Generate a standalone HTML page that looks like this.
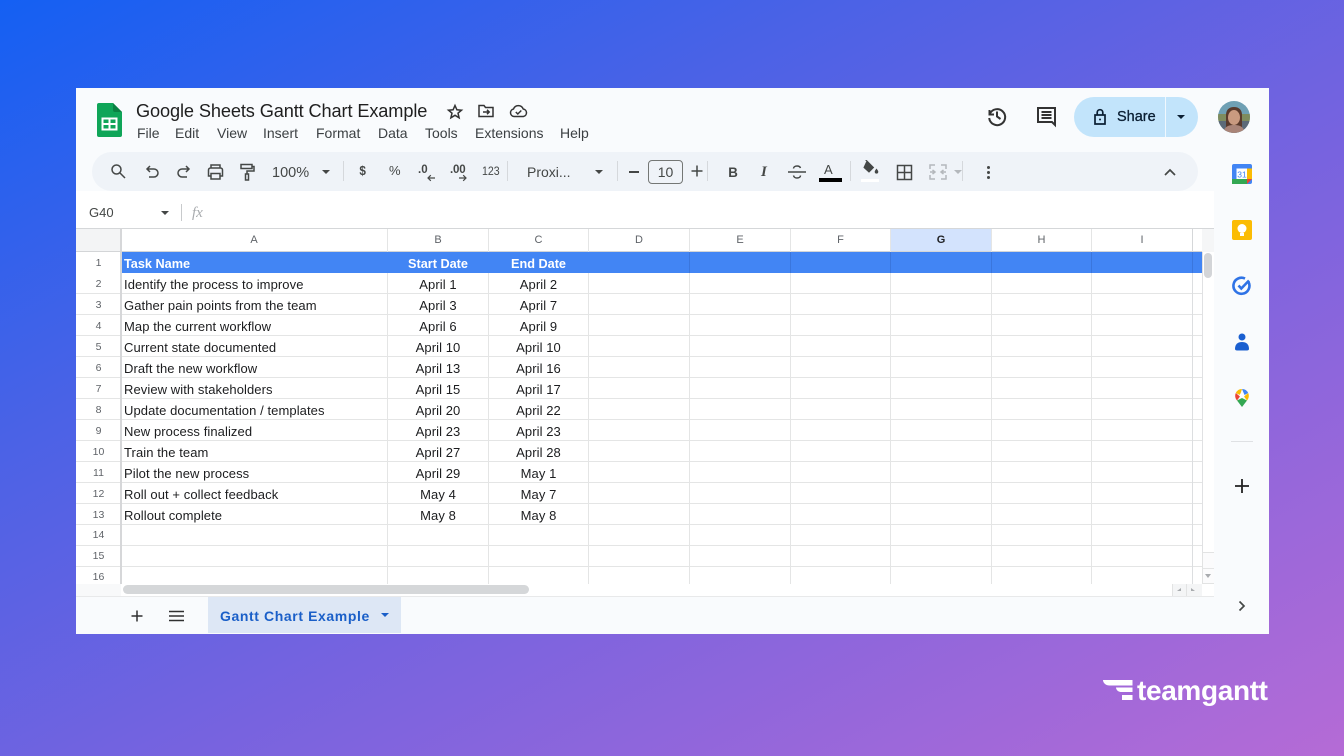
<!DOCTYPE html>
<html lang="en"><head><meta charset="utf-8"><title>Google Sheets Gantt Chart Example</title>
<style>
*{box-sizing:border-box;margin:0;padding:0}
html,body{width:1344px;height:756px;overflow:hidden}
body{position:relative;background:linear-gradient(152deg,#1460f3 0%,#4a62e6 30%,#7763df 58%,#b56bd6 100%);font-family:"Liberation Sans",sans-serif;color:#202124}
.a{position:absolute;white-space:nowrap}
#app{position:absolute;left:76px;top:88px;width:1193px;height:546px;background:#f9fbfd;overflow:hidden;filter:blur(.35px)}
.t{position:absolute;white-space:nowrap;line-height:16px}
.m{font-size:14px;color:#3c4043;top:37px}
.l{position:absolute;background:#e4e5e5}
.v{position:absolute;width:1px;background:#e4e5e5;top:141px;height:23px}
.w{position:absolute;width:1px;background:#e4e5e5;top:185px;height:311px}
.b{position:absolute;width:1px;background:rgba(40,80,160,.28);top:164px;height:21px}
.ic{position:absolute;overflow:visible;fill:none;stroke:#444746;stroke-width:1.5}
.sep{position:absolute;width:1px;height:20px;top:73px;background:#d5d8dc}
.c{position:absolute;font-size:13px;line-height:20px;color:#1c1d1f;white-space:nowrap;letter-spacing:.08px}
.ctr{text-align:center}
.rh{position:absolute;left:0;width:45px;text-align:center;font-size:10.5px;color:#5f6368;line-height:20px}
.ch{position:absolute;top:141px;text-align:center;font-size:11px;color:#5f6368;line-height:22px}
.tri{position:absolute;width:0;height:0;border-left:4px solid transparent;border-right:4px solid transparent;border-top:4px solid #444746}
</style></head><body>
<div id="app">
<svg class="a" style="left:21px;top:15px" width="25" height="34" viewBox="0 0 25 34"><path d="M2 0H16L25 9V32a2 2 0 0 1-2 2H2a2 2 0 0 1-2-2V2a2 2 0 0 1 2-2z" fill="#0fa558"/><path d="M16 0L25 9H18a2 2 0 0 1-2-2z" fill="#0b8043"/><path d="M5.500 15.500H19.500V26.500H5.500zM5.500 21H19.500M12.500 15.500V26.500" fill="none" stroke="#fff" stroke-width="2"/></svg>
<div class="t" style="left:60px;top:12px;font-size:18.200px;line-height:22px;color:#1f1f1f;letter-spacing:-.12px">Google Sheets Gantt Chart Example</div>
<svg class="ic" style="left:370px;top:15px;stroke:#333" width="18" height="18" viewBox="0 0 18 18"><path d="M9 2.500l1.900 4.300 4.600.4-3.500 3 1.100 4.600L9 12.300l-4.100 2.500L6 10.200l-3.500-3 4.600-.4z"/></svg>
<svg class="ic" style="left:401px;top:15px;stroke:#333" width="18" height="16" viewBox="0 0 18 16"><path d="M2 2.500h5l1.500 2H16v9H2zM6 9h6M10 6.800L12.200 9 10 11.200"/></svg>
<svg class="ic" style="left:433px;top:15px;stroke:#333" width="19" height="16" viewBox="0 0 19 16"><path d="M5 13.500a3.800 3.800 0 0 1-.5-7.500A5.200 5.200 0 0 1 14.200 6a3.800 3.800 0 0 1 .2 7.500zM6.800 9l2 2 3.500-3.500"/></svg>
<div class="t m" style="left:61px">File</div><div class="t m" style="left:99px">Edit</div><div class="t m" style="left:141px">View</div><div class="t m" style="left:187px">Insert</div><div class="t m" style="left:240px">Format</div><div class="t m" style="left:302px">Data</div><div class="t m" style="left:349px">Tools</div><div class="t m" style="left:399px">Extensions</div><div class="t m" style="left:484px">Help</div>
<svg class="ic" style="left:910px;top:17px;stroke:#333;stroke-width:2" width="22" height="22" viewBox="0 0 22 22"><path d="M3.500 5v4.500H8M3.800 9A8 8 0 1 1 3.200 13M11 6.500V11.500L14.500 14"/></svg>
<svg class="ic" style="left:960px;top:18px;stroke:#333;stroke-width:2" width="22" height="22" viewBox="0 0 22 22"><path d="M2 2h17v17l-3-3H2zM5.500 6h10M5.500 9h10M5.500 12h10"/></svg>
<div class="a" style="left:998px;top:9px;width:124px;height:40px;border-radius:20px;background:#c2e4fb"></div>
<div class="a" style="left:1089px;top:9px;width:1px;height:40px;background:#f0f8fe"></div>
<svg class="ic" style="left:1016px;top:20px;stroke:#0b1f33;stroke-width:1.700" width="16" height="18" viewBox="0 0 16 18"><path d="M3 7h10v9H3zM5.200 7V4.500a2.800 2.800 0 0 1 5.600 0V7"/><circle cx="8" cy="11.500" r="1" fill="#0b1f33" stroke="none"/></svg>
<div class="t" style="left:1041px;top:21px;font-size:14.500px;color:#0b1f33;-webkit-text-stroke:.3px #0b1f33">Share</div>
<div class="tri" style="left:1101px;top:27px;border-top-color:#0b1f33"></div>
<svg class="a" style="left:1142px;top:13px" width="32" height="32" viewBox="0 0 32 32"><defs><clipPath id="av"><circle cx="16" cy="16" r="16"/></clipPath></defs><g clip-path="url(#av)"><rect width="32" height="32" fill="#6fa0b4"/><rect y="13" width="32" height="9" fill="#7e8c5e"/><rect y="20" width="32" height="12" fill="#5c6a78"/><path d="M8 28V14c0-5 3-8 8-8s8 3 8 8v14z" fill="#5a3a2c"/><ellipse cx="16" cy="16.500" rx="6" ry="7.500" fill="#c99a80"/><path d="M5 32c1-6 5-8 11-8s10 2 11 8z" fill="#a98478"/></g></svg>
<div class="a" style="left:16px;top:64px;width:1106px;height:39px;border-radius:20px;background:#eff3f8"></div>
<svg class="ic" style="left:34px;top:75px" width="16" height="16" viewBox="0 0 16 16"><circle cx="6.500" cy="6.500" r="4.500"/><path d="M10 10l5 5"/></svg>
<svg class="ic" style="left:69px;top:77px" width="15" height="14" viewBox="0 0 15 14"><path d="M5 1L2 4l3 3M2 4h7a3.700 3.700 0 0 1 0 8H4"/></svg>
<svg class="ic" style="left:100px;top:77px" width="15" height="14" viewBox="0 0 15 14"><path d="M10 1l3 3-3 3M13 4H6a3.700 3.700 0 0 0 0 8h5"/></svg>
<svg class="ic" style="left:131px;top:76px" width="17" height="16" viewBox="0 0 17 16"><path d="M4 4V1h9v3M4 12H1.500V6a2 2 0 0 1 2-2h10a2 2 0 0 1 2 2v6H13M4 9.500h9V15H4z"/></svg>
<svg class="ic" style="left:164px;top:75px" width="15" height="18" viewBox="0 0 15 18"><path d="M1 1.500h11v4H1zM12 3.500h2V8H7v3M5.500 11h3v6h-3z"/></svg>
<div class="t" style="left:196px;top:77px;font-size:14.500px;color:#444746">100%</div>
<div class="tri" style="left:246px;top:82px"></div>
<div class="sep" style="left:267px"></div>
<div class="t" style="left:283px;top:75px;font-size:13px;font-weight:700;color:#444746;transform:scaleX(.9)">$</div>
<div class="t" style="left:313px;top:75px;font-size:13px;color:#444746">%</div>
<div class="t" style="left:342px;top:74px;font-size:11.500px;font-weight:700;color:#444746">.0</div>
<svg class="ic" style="left:351px;top:86px;stroke-width:1.200" width="8" height="8" viewBox="0 0 8 8"><path d="M8 4H1M3.800 1.200L1 4l2.800 2.800"/></svg>
<div class="t" style="left:374px;top:74px;font-size:11.500px;font-weight:700;color:#444746;letter-spacing:-.2px">.00</div>
<svg class="ic" style="left:383px;top:86px;stroke-width:1.200" width="8" height="8" viewBox="0 0 8 8"><path d="M0 4h7M4.200 1.200L7 4 4.200 6.800"/></svg>
<div class="t" style="left:406px;top:76px;font-size:11.500px;color:#444746;transform:scaleX(.92);transform-origin:left">123</div>
<div class="sep" style="left:431px"></div>
<div class="t" style="left:451px;top:76px;font-size:14px;color:#444746">Proxi...</div>
<div class="tri" style="left:519px;top:82px"></div>
<div class="sep" style="left:541px"></div>
<div class="a" style="left:553px;top:83px;width:10px;height:1.500px;background:#444746"></div>
<div class="a" style="left:572px;top:72px;width:35px;height:24px;border:1px solid #747775;border-radius:4px;font-size:14px;line-height:22px;text-align:center;color:#444746">10</div>
<svg class="ic" style="left:615px;top:77px" width="12" height="12" viewBox="0 0 12 12"><path d="M6 .5v11M.5 6h11"/></svg>
<div class="sep" style="left:631px"></div>
<div class="t" style="left:652px;top:76px;font-size:14px;font-weight:700;color:#444746;transform:scaleX(.95)">B</div>
<div class="t" style="left:685px;top:76px;font-size:15px;font-style:italic;font-family:'Liberation Serif',serif;font-weight:700;color:#444746">I</div>
<svg class="ic" style="left:712px;top:76px" width="18" height="16" viewBox="0 0 18 16"><path d="M0 8h18M12.500 4C12 2.500 11 2 9 2S5.500 3 5.500 4.500M5.500 11.500C6 13.500 7 14 9 14s3.500-1 3.500-2.500"/></svg>
<div class="t" style="left:748px;top:74px;font-size:13px;color:#444746">A</div>
<div class="a" style="left:743px;top:90px;width:23px;height:4px;background:#000"></div>
<div class="sep" style="left:774px"></div>
<svg class="a" style="left:786px;top:72px" width="18" height="16" viewBox="0 0 18 16"><path d="M5 1l6.500 6.500L7 12 2 7.500zM5 1L3.500 0" fill="#444746" stroke="#444746" stroke-width="1"/><path d="M14.500 8.500c1 1.500 1.800 2.300 1.800 3.300a1.800 1.800 0 0 1-3.600 0c0-1 .8-1.800 1.800-3.300z" fill="#444746"/></svg>
<div class="a" style="left:785px;top:91px;width:18px;height:3px;background:#fff"></div>
<svg class="ic" style="left:820px;top:76px" width="17" height="17" viewBox="0 0 17 17"><path d="M1.500 1.500h14v14h-14zM8.500 1.500v14M1.500 8.500h14"/></svg>
<svg class="ic" style="left:853px;top:76px;stroke:#b4b8bc" width="18" height="16" viewBox="0 0 18 16"><path d="M1 5V1h5M1 11v4h5M17 5V1h-5M17 11v4h-5M1 8h4M17 8h-4M3.500 6L6 8 3.500 10M14.500 6L12 8l2.500 2"/></svg>
<div class="tri" style="left:878px;top:82px;border-top-color:#b4b8bc"></div>
<div class="sep" style="left:886px"></div>
<div class="a" style="left:911px;top:78px;width:3px;height:3px;border-radius:2px;background:#444746;box-shadow:0 5px 0 #444746,0 10px 0 #444746"></div>
<svg class="ic" style="left:1088px;top:80px;stroke-width:1.700" width="12" height="8" viewBox="0 0 12 8"><path d="M1 7l5-5 5 5"/></svg>
<div class="a" style="left:0;top:103px;width:1138px;height:37px;background:#fff"></div>
<div class="t" style="left:13px;top:117px;font-size:13px;color:#444746">G40</div>
<div class="tri" style="left:85px;top:123px"></div>
<div class="a" style="left:105px;top:116px;width:1px;height:17px;background:#c8cacc"></div>
<div class="t" style="left:116px;top:117px;font-size:15px;font-style:italic;font-family:'Liberation Serif',serif;color:#a8abae">fx</div>
<div class="a" style="left:0;top:140px;width:1138px;height:369px;background:#fff"></div>
<div class="a" style="left:0;top:140px;width:45px;height:24px;background:#f3f4f5"></div>
<div class="a" style="left:815px;top:141px;width:100px;height:23px;background:#d3e3fd"></div>
<div class="l" style="left:0;top:140px;width:1138px;height:1px;background:#d5d7d9"></div>
<div class="a" style="left:1126px;top:141px;width:12px;height:23px;background:#f5f6f7"></div>
<div class="a" style="left:45px;top:164px;width:1081px;height:21px;background:#4285f4"></div>
<div class="l" style="left:0;top:163px;width:1126px;height:1px;background:#d3d5d7"></div>
<div class="l" style="left:0;top:205px;width:1126px;height:1px"></div><div class="l" style="left:0;top:226px;width:1126px;height:1px"></div><div class="l" style="left:0;top:247px;width:1126px;height:1px"></div><div class="l" style="left:0;top:268px;width:1126px;height:1px"></div><div class="l" style="left:0;top:289px;width:1126px;height:1px"></div><div class="l" style="left:0;top:310px;width:1126px;height:1px"></div><div class="l" style="left:0;top:331px;width:1126px;height:1px"></div><div class="l" style="left:0;top:352px;width:1126px;height:1px"></div><div class="l" style="left:0;top:373px;width:1126px;height:1px"></div><div class="l" style="left:0;top:394px;width:1126px;height:1px"></div><div class="l" style="left:0;top:415px;width:1126px;height:1px"></div><div class="l" style="left:0;top:436px;width:1126px;height:1px"></div><div class="l" style="left:0;top:457px;width:1126px;height:1px"></div><div class="l" style="left:0;top:478px;width:1126px;height:1px"></div>
<div class="l" style="left:44px;top:140px;width:2px;height:369px;background:#d6d7d9"></div>
<div class="v" style="left:311px"></div><div class="w" style="left:311px"></div>
<div class="v" style="left:412px"></div><div class="w" style="left:412px"></div>
<div class="v" style="left:512px"></div><div class="w" style="left:512px"></div>
<div class="v" style="left:613px"></div><div class="w" style="left:613px"></div><div class="b" style="left:613px"></div>
<div class="v" style="left:714px"></div><div class="w" style="left:714px"></div><div class="b" style="left:714px"></div>
<div class="v" style="left:814px"></div><div class="w" style="left:814px"></div><div class="b" style="left:814px"></div>
<div class="v" style="left:915px"></div><div class="w" style="left:915px"></div><div class="b" style="left:915px"></div>
<div class="v" style="left:1015px"></div><div class="w" style="left:1015px"></div><div class="b" style="left:1015px"></div>
<div class="v" style="left:1116px;background:#d5d7d9"></div><div class="w" style="left:1116px;background:#dcdee0"></div><div class="b" style="left:1116px"></div>
<div class="l" style="left:1126px;top:164px;width:1px;height:345px;background:#e0e1e3"></div>
<div class="ch" style="left:45px;width:266px">A</div><div class="ch" style="left:312px;width:100px">B</div><div class="ch" style="left:413px;width:99px">C</div><div class="ch" style="left:513px;width:100px">D</div><div class="ch" style="left:614px;width:100px">E</div><div class="ch" style="left:715px;width:99px">F</div><div class="ch" style="left:815px;width:100px;font-weight:700;color:#202124">G</div><div class="ch" style="left:916px;width:99px">H</div><div class="ch" style="left:1016px;width:100px">I</div>
<div class="rh" style="top:165px">1</div><div class="rh" style="top:186px">2</div><div class="rh" style="top:207px">3</div><div class="rh" style="top:228px">4</div><div class="rh" style="top:249px">5</div><div class="rh" style="top:270px">6</div><div class="rh" style="top:291px">7</div><div class="rh" style="top:312px">8</div><div class="rh" style="top:333px">9</div><div class="rh" style="top:354px">10</div><div class="rh" style="top:375px">11</div><div class="rh" style="top:396px">12</div><div class="rh" style="top:417px">13</div><div class="rh" style="top:437px">14</div><div class="rh" style="top:458px">15</div><div class="rh" style="top:479px">16</div>
<div class="c" style="left:48px;top:166px;color:#fff;font-weight:700;font-size:12.700px;letter-spacing:0">Task Name</div>
<div class="c ctr" style="left:312px;width:100px;top:166px;color:#fff;font-weight:700;font-size:12.700px;letter-spacing:0">Start Date</div>
<div class="c ctr" style="left:413px;width:99px;top:166px;color:#fff;font-weight:700;font-size:12.700px;letter-spacing:0">End Date</div>
<div class="c" style="left:48px;top:187px">Identify the process to improve</div><div class="c ctr" style="left:312px;width:100px;top:187px">April 1</div><div class="c ctr" style="left:413px;width:99px;top:187px">April 2</div>
<div class="c" style="left:48px;top:208px">Gather pain points from the team</div><div class="c ctr" style="left:312px;width:100px;top:208px">April 3</div><div class="c ctr" style="left:413px;width:99px;top:208px">April 7</div>
<div class="c" style="left:48px;top:229px">Map the current workflow</div><div class="c ctr" style="left:312px;width:100px;top:229px">April 6</div><div class="c ctr" style="left:413px;width:99px;top:229px">April 9</div>
<div class="c" style="left:48px;top:250px">Current state documented</div><div class="c ctr" style="left:312px;width:100px;top:250px">April 10</div><div class="c ctr" style="left:413px;width:99px;top:250px">April 10</div>
<div class="c" style="left:48px;top:271px">Draft the new workflow</div><div class="c ctr" style="left:312px;width:100px;top:271px">April 13</div><div class="c ctr" style="left:413px;width:99px;top:271px">April 16</div>
<div class="c" style="left:48px;top:292px">Review with stakeholders</div><div class="c ctr" style="left:312px;width:100px;top:292px">April 15</div><div class="c ctr" style="left:413px;width:99px;top:292px">April 17</div>
<div class="c" style="left:48px;top:313px">Update documentation / templates</div><div class="c ctr" style="left:312px;width:100px;top:313px">April 20</div><div class="c ctr" style="left:413px;width:99px;top:313px">April 22</div>
<div class="c" style="left:48px;top:334px">New process finalized</div><div class="c ctr" style="left:312px;width:100px;top:334px">April 23</div><div class="c ctr" style="left:413px;width:99px;top:334px">April 23</div>
<div class="c" style="left:48px;top:355px">Train the team</div><div class="c ctr" style="left:312px;width:100px;top:355px">April 27</div><div class="c ctr" style="left:413px;width:99px;top:355px">April 28</div>
<div class="c" style="left:48px;top:376px">Pilot the new process</div><div class="c ctr" style="left:312px;width:100px;top:376px">April 29</div><div class="c ctr" style="left:413px;width:99px;top:376px">May 1</div>
<div class="c" style="left:48px;top:397px">Roll out + collect feedback</div><div class="c ctr" style="left:312px;width:100px;top:397px">May 4</div><div class="c ctr" style="left:413px;width:99px;top:397px">May 7</div>
<div class="c" style="left:48px;top:418px">Rollout complete</div><div class="c ctr" style="left:312px;width:100px;top:418px">May 8</div><div class="c ctr" style="left:413px;width:99px;top:418px">May 8</div>
<div class="a" style="left:1128px;top:165px;width:8px;height:25px;border-radius:4px;background:#d3d5d8"></div>
<div class="a" style="left:45px;top:496px;width:1093px;height:13px;background:#fff"></div>
<div class="a" style="left:47px;top:497px;width:406px;height:9px;border-radius:5px;background:#d5d7d9"></div>
<div class="a" style="left:0;top:496px;width:45px;height:13px;background:#f8f9fa"></div>
<div class="l" style="left:0;top:508px;width:1138px;height:1px;background:#e8e9ea"></div>
<div class="a" style="left:1096px;top:496px;width:30px;height:12px;background:#f4f5f6;border-left:1px solid #e2e3e3"></div>
<div class="a" style="left:1110px;top:496px;width:1px;height:12px;background:#e2e3e3"></div>
<div class="a" style="left:1126px;top:464px;width:12px;height:32px;background:#fbfbfc;border:1px solid #e2e3e3;border-right:0"></div>
<div class="l" style="left:1126px;top:480px;width:12px;height:1px"></div>
<div class="tri" style="left:1129px;top:471px;border-width:0 3px 4px;border-color:transparent transparent #a8abae"></div>
<div class="tri" style="left:1129px;top:486px;border-width:4px 3px 0;border-top-color:#a8abae"></div>
<div class="tri" style="left:1101px;top:500px;border-width:3px 4px 3px 0;border-color:transparent #a8abae transparent transparent"></div>
<div class="tri" style="left:1115px;top:500px;border-width:3px 0 3px 4px;border-color:transparent transparent transparent #a8abae"></div>
<svg class="ic" style="left:55px;top:522px;stroke:#303030" width="12" height="12" viewBox="0 0 12 12"><path d="M6 .5v11M.5 6h11"/></svg>
<svg class="ic" style="left:93px;top:522px;stroke:#303030" width="15" height="12" viewBox="0 0 15 12"><path d="M0 1.500h15M0 6h15M0 10.500h15"/></svg>
<div class="a" style="left:132px;top:509px;width:193px;height:36px;background:#dde7f5"></div>
<div class="t" style="left:144px;top:520px;font-size:14px;font-weight:700;color:#1a5fc8;letter-spacing:.6px">Gantt Chart Example</div>
<div class="tri" style="left:305px;top:525px;border-top-color:#1a5fc8"></div>
<svg class="a" style="left:1156px;top:76px" width="20" height="20" viewBox="0 0 20 20"><rect width="20" height="20" rx="2" fill="#4285f4"/><rect x="4.500" y="4.500" width="11" height="11" fill="#fff"/><rect x="15" y="4.500" width="5" height="11" fill="#fbbc04"/><rect y="15" width="15" height="5" fill="#34a853"/><path d="M15 15h5l-5 5z" fill="#ea4335"/><text x="10" y="13.500" font-size="8.500" font-family="Liberation Sans" fill="#4285f4" text-anchor="middle">31</text></svg>
<svg class="a" style="left:1156px;top:132px" width="20" height="20" viewBox="0 0 20 20"><rect width="20" height="20" rx="2" fill="#fbbc04"/><circle cx="10" cy="8.500" r="4.500" fill="#fff"/><rect x="8" y="13" width="4" height="3" fill="#fff"/></svg>
<svg class="a" style="left:1156px;top:188px" width="20" height="20" viewBox="0 0 20 20"><path d="M16.500 6A8 8 0 1 1 13 2.600" fill="none" stroke="#2f73e6" stroke-width="2.600"/><path d="M6.500 9.500L9.300 12.500 17 4.500" fill="none" stroke="#2f73e6" stroke-width="2.600"/></svg>
<svg class="a" style="left:1158px;top:245px" width="16" height="18" viewBox="0 0 16 18"><circle cx="8" cy="4" r="3.500" fill="#1a5fd0"/><path d="M1 16c0-5 3-7 7-7s7 2 7 7c0 1-1 1.500-2 1.500H3C2 17.500 1 17 1 16z" fill="#1a5fd0"/></svg>
<svg class="a" style="left:1159px;top:301px" width="14" height="18" viewBox="0 0 14 18"><path d="M7 18L2 11.500 7 9l5 2.500z" fill="#34a853"/><path d="M2 11.500C0 9 -.3 6.500 .8 4L5 7.500z" fill="#ea4335"/><path d="M.8 4A7 7 0 0 1 7 0L5 6z" fill="#fbbc04"/><path d="M7 0A7 7 0 0 1 13.200 4L9.500 6z" fill="#4285f4"/><path d="M13.200 4C14.300 6.500 14 9 12 11.500L9 7.500z" fill="#fbbc04"/><circle cx="7" cy="6.500" r="2.400" fill="#fff"/></svg>
<div class="a" style="left:1155px;top:353px;width:22px;height:1px;background:#dfe1e4"></div>
<svg class="ic" style="left:1159px;top:391px;stroke:#222;stroke-width:1.800" width="14" height="14" viewBox="0 0 14 14"><path d="M7 0v14M0 7h14"/></svg>
<svg class="ic" style="left:1162px;top:512px;stroke-width:1.700" width="8" height="12" viewBox="0 0 8 12"><path d="M1.500 1.500L6 6l-4.500 4.500"/></svg>
</div>
<svg class="a" style="left:1103px;top:680px" width="30" height="20" viewBox="0 0 30 20"><path d="M0 0H29.500V5.500H6.500A6.500 5.500 0 0 1 0 0z" fill="#fff"/><path d="M13 7.500H29.500V12H17.500A5 4.500 0 0 1 13 7.500z" fill="#fff"/><path d="M19 15H29.500V20H19z" fill="#fff"/></svg>
<div class="a" style="left:1137px;top:673px;font-size:28px;line-height:36px;font-weight:700;color:#fff;letter-spacing:-.35px">teamgantt</div>
</body></html>
